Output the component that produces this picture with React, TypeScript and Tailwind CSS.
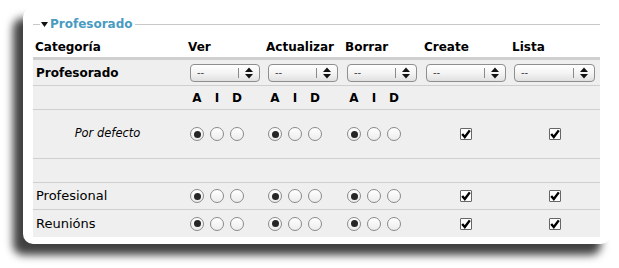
import React from "react";

const font = { fontFamily: '"DejaVu Sans", Verdana, sans-serif' };

function Select({ w }: { w: string }) {
  return (
    <div
      className={`${w} ml-[4px] h-[18px] rounded-[4px] border border-[#8e8e8e] bg-gradient-to-b from-white via-[#f4f4f4] to-[#e0e0e0] flex items-center relative`}
    >
      <span className="pl-[6px] text-[10px] leading-none text-[#444] flex-1">--</span>
      <span className="w-px h-[10px] bg-[#8a8a8a]" />
      <span className="w-[20px] flex justify-center">
        <svg width="8" height="12" viewBox="0 0 8 12">
          <path d="M4 0.5 L8 5 L0 5 Z" fill="#111" />
          <path d="M0 7 L8 7 L4 11.5 Z" fill="#111" />
        </svg>
      </span>
    </div>
  );
}

function Radio({ checked }: { checked?: boolean }) {
  return (
    <span className="w-[14px] h-[14px] rounded-full border border-[#8a8a8a] bg-gradient-to-b from-white to-[#ececec] flex items-center justify-center">
      {checked && <span className="w-[7px] h-[7px] rounded-full bg-[#262626]" />}
    </span>
  );
}

function Radios() {
  return (
    <div className="flex pl-[4px] gap-[6px] items-center">
      <Radio checked />
      <Radio />
      <Radio />
    </div>
  );
}

function Check() {
  return (
    <span className="w-[12px] h-[12px] border border-[#666] bg-white flex items-center justify-center rounded-[1px]">
      <svg width="10" height="10" viewBox="0 0 10 10">
        <path d="M1.2 5 L3.8 8 L8.8 1.4" fill="none" stroke="#000" strokeWidth="2.4" />
      </svg>
    </span>
  );
}

function AID() {
  return (
    <div className="flex pl-[4px] gap-[6px] items-center text-[12px] font-bold">
      <span className="w-[14px] text-center">A</span>
      <span className="w-[14px] text-center">I</span>
      <span className="w-[14px] text-center">D</span>
    </div>
  );
}

const grid = "grid grid-cols-[153px_78px_79px_79px_88px_90px]";

function DataRow({ label, border }: { label: React.ReactNode; border?: boolean }) {
  return (
    <div className={`${grid} h-[27px] items-center bg-[#efefef] ${border ? "border-b border-[#cfcfcf]" : ""}`}>
      {label}
      <Radios />
      <Radios />
      <Radios />
      <div className="flex justify-center"><Check /></div>
      <div className="flex justify-center"><Check /></div>
    </div>
  );
}

export default function App() {
  return (
    <div className="w-[619px] h-[268px] bg-white pt-[7px] pl-[23px] text-black" style={font}>
      <div className="w-[588px] h-[237px] rounded-[10px] bg-white shadow-[-10px_11px_8px_rgba(0,0,0,0.75)] pt-[10px] pl-[10px] pr-[11px]">
        <div className="flex items-center h-[14px]">
          <span className="w-[7px] h-px bg-[#c8c8c8]" />
          <svg width="7" height="5" viewBox="0 0 7 5" className="ml-[1px]">
            <path d="M0 0 L7 0 L3.5 5 Z" fill="#111" />
          </svg>
          <span className="ml-[2px] text-[12px] font-bold text-[#4a9bc1] leading-none">Profesorado</span>
          <span className="ml-[2px] flex-1 h-px bg-[#c8c8c8]" />
        </div>
        <div className="mt-[6px]">
          <div className={`${grid} h-[23px] items-center text-[12px] font-bold border-b-[3px] border-[#cfcfcf]`}>
            <span className="pl-[2px]">Categoría</span>
            <span className="pl-[2px]">Ver</span>
            <span className="pl-[2px]">Actualizar</span>
            <span className="pl-[2px]">Borrar</span>
            <span className="pl-[2px]">Create</span>
            <span className="pl-[2px]">Lista</span>
          </div>
          <div className={`${grid} h-[26px] items-center bg-[#efefef] border-b border-[#cfcfcf]`}>
            <span className="pl-[3px] text-[12px] font-bold">Profesorado</span>
            <Select w="w-[70px]" />
            <Select w="w-[70px]" />
            <Select w="w-[70px]" />
            <Select w="w-[80px]" />
            <Select w="w-[81px]" />
          </div>
          <div className={`${grid} h-[24px] items-center bg-[#efefef] border-b border-[#cfcfcf]`}>
            <span />
            <AID />
            <AID />
            <AID />
            <span />
            <span />
          </div>
          <div className={`${grid} h-[49px] items-center bg-[#efefef] border-b border-[#cfcfcf]`}>
            <span className="text-center italic text-[11.5px] pr-[4px]">Por defecto</span>
            <Radios />
            <Radios />
            <Radios />
            <div className="flex justify-center"><Check /></div>
            <div className="flex justify-center"><Check /></div>
          </div>
          <div className="h-[24px] bg-[#efefef] border-b border-[#cfcfcf]" />
          <DataRow border label={<span className="pl-[3px] text-[13px]">Profesional</span>} />
          <DataRow label={<span className="pl-[3px] text-[13px]">Reunións</span>} />
        </div>
      </div>
    </div>
  );
}
